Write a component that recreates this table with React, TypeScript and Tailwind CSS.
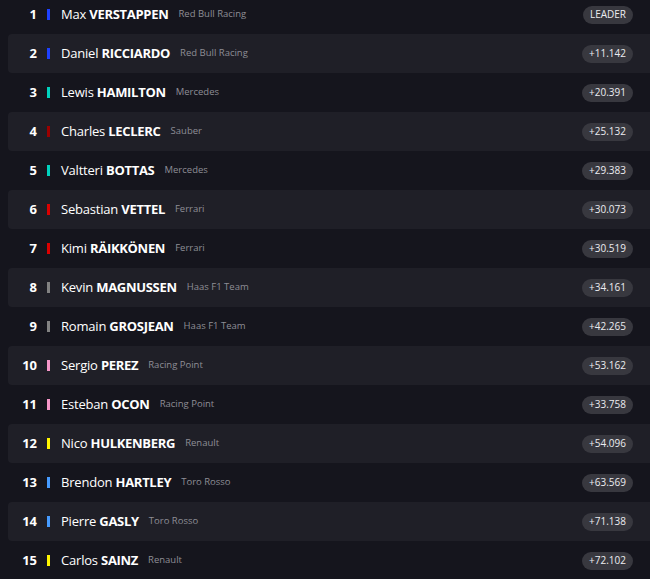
const drivers = [
  { pos: 1, first: "Max", last: "VERSTAPPEN", team: "Red Bull Racing", color: "bg-[#1e41ff]", gap: "LEADER" },
  { pos: 2, first: "Daniel", last: "RICCIARDO", team: "Red Bull Racing", color: "bg-[#1e41ff]", gap: "+11.142" },
  { pos: 3, first: "Lewis", last: "HAMILTON", team: "Mercedes", color: "bg-[#00d2be]", gap: "+20.391" },
  { pos: 4, first: "Charles", last: "LECLERC", team: "Sauber", color: "bg-[#9b0000]", gap: "+25.132" },
  { pos: 5, first: "Valtteri", last: "BOTTAS", team: "Mercedes", color: "bg-[#00d2be]", gap: "+29.383" },
  { pos: 6, first: "Sebastian", last: "VETTEL", team: "Ferrari", color: "bg-[#dc0000]", gap: "+30.073" },
  { pos: 7, first: "Kimi", last: "RÄIKKÖNEN", team: "Ferrari", color: "bg-[#dc0000]", gap: "+30.519" },
  { pos: 8, first: "Kevin", last: "MAGNUSSEN", team: "Haas F1 Team", color: "bg-[#828282]", gap: "+34.161" },
  { pos: 9, first: "Romain", last: "GROSJEAN", team: "Haas F1 Team", color: "bg-[#828282]", gap: "+42.265" },
  { pos: 10, first: "Sergio", last: "PEREZ", team: "Racing Point", color: "bg-[#f596c8]", gap: "+53.162" },
  { pos: 11, first: "Esteban", last: "OCON", team: "Racing Point", color: "bg-[#f596c8]", gap: "+33.758" },
  { pos: 12, first: "Nico", last: "HULKENBERG", team: "Renault", color: "bg-[#fff500]", gap: "+54.096" },
  { pos: 13, first: "Brendon", last: "HARTLEY", team: "Toro Rosso", color: "bg-[#469bff]", gap: "+63.569" },
  { pos: 14, first: "Pierre", last: "GASLY", team: "Toro Rosso", color: "bg-[#469bff]", gap: "+71.138" },
  { pos: 15, first: "Carlos", last: "SAINZ", team: "Renault", color: "bg-[#fff500]", gap: "+72.102" },
];

export default function App() {
  return (
    <div className="w-[650px] h-[579px] overflow-hidden bg-[#15151d] font-['Open_Sans',sans-serif]">
      <div className="-mt-[5px] flex flex-col">
        {drivers.map((d, i) => (
          <div
            key={d.pos}
            className={`ml-2 h-[39px] flex items-center rounded-l ${i % 2 === 1 ? "bg-[#1f1f27]" : ""}`}
          >
            <span className="w-[29px] text-right text-[13px] font-bold text-white">{d.pos}</span>
            <span className={`ml-[10px] w-[3px] h-[11px] ${d.color}`} />
            <span className="ml-[11px] text-[13px] text-white tracking-[-0.2px]">
              {d.first} <span className="font-bold tracking-[-0.3px]">{d.last}</span>
            </span>
            <span className="ml-[10px] text-[9.5px] text-[#8e8e96]">{d.team}</span>
            <span className="ml-auto mr-[17px] h-[18px] px-[7px] flex items-center rounded-full bg-[#38383f] text-[10px] font-medium text-[#ececf0]">
              {d.gap}
            </span>
          </div>
        ))}
      </div>
    </div>
  );
}
